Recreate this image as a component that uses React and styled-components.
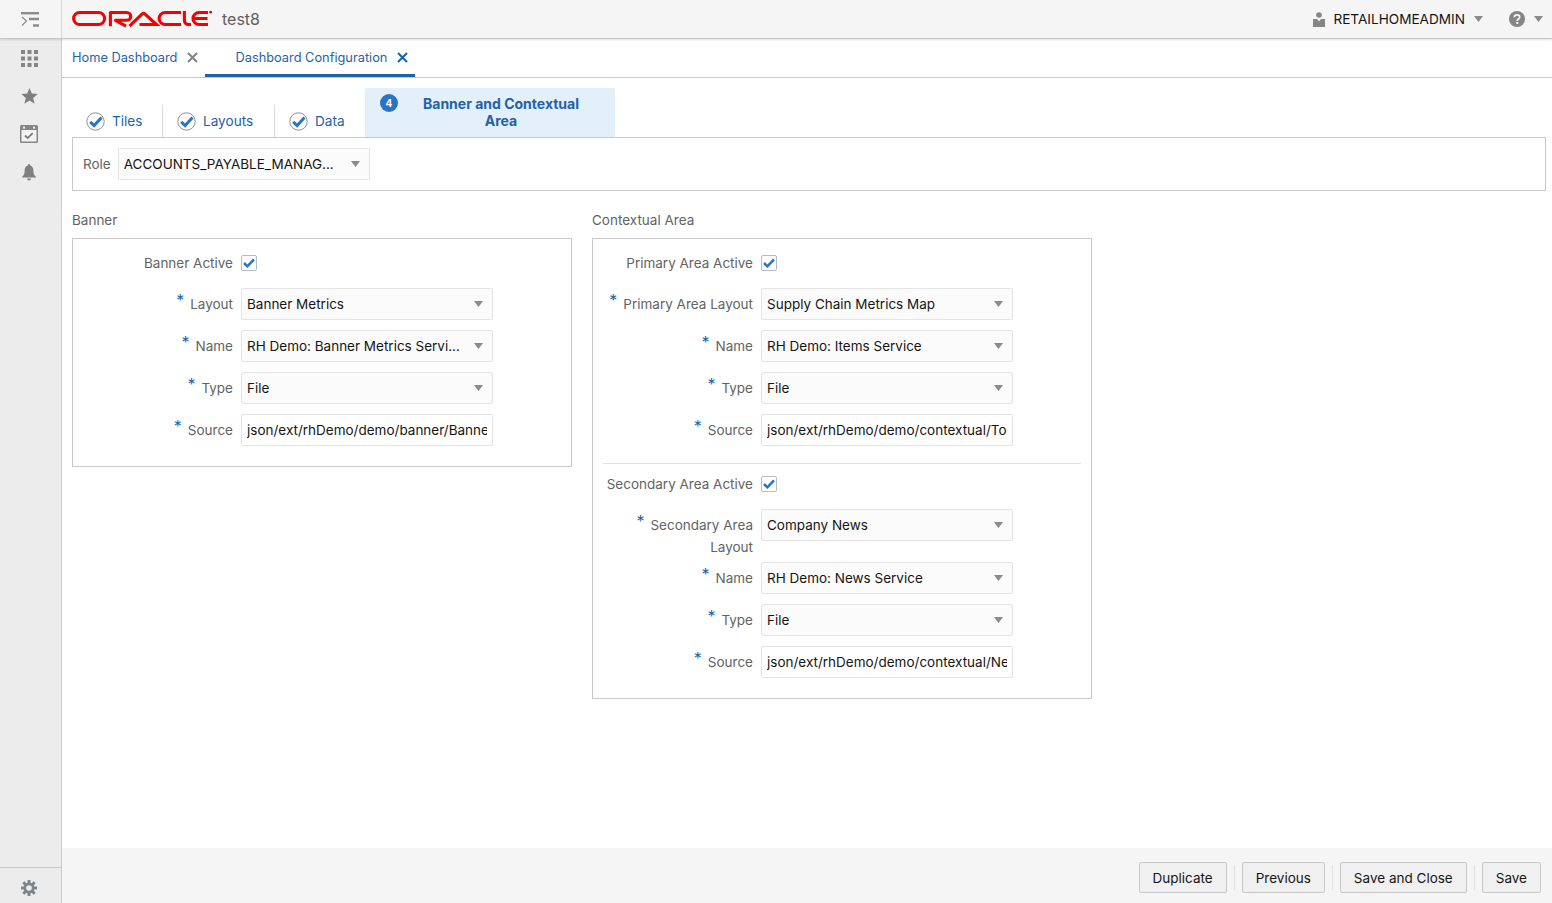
import React from 'react';
import styled, { createGlobalStyle } from 'styled-components';

const GlobalStyle = createGlobalStyle`
  html, body {
    margin: 0;
    height: 100%;
    overflow: hidden;
    background: #fff;
    font-family: Inter, "Noto Sans", "Liberation Sans", sans-serif;
    font-size: 13.5px;
    color: #161513;
  }
  * { box-sizing: border-box; }
`;

const BLUE = '#1f62a8';

function OracleLogo() {
  return (
    <svg width="141" height="18" viewBox="0 0 141 18" role="img" aria-label="Oracle">
      <g fill="none" stroke="#f80000" strokeWidth="3.1">
        <rect x="1.600" y="2.500" width="31" height="12" rx="6" />
        <path d="M38.400 16.200V2.500h16.400a3.900 3.900 0 0 1 0 7.800H43.500l10.500 5.800" strokeLinejoin="round" />
        <path d="M57.500 16.200 70.500 3.600a1.400 1.400 0 0 1 2 0L84.500 14.500H67.500" />
        <path d="M109 2.500H93.100a6 6 0 0 0 0 12H109" />
        <path d="M112.400 1V10.500a4 4 0 0 0 4 4H119" />
        <path d="M136 2.500H127a6 6 0 0 0 0 12h9M122 8.500h13.500" />
      </g>
      <circle cx="138.600" cy="2.200" r="1.400" fill="#f80000" />
    </svg>
  );
}

function Caret() {
  return (
    <svg width="9" height="6" viewBox="0 0 9 6">
      <path d="M0 0h9L4.500 6z" fill="#8a8a8a" />
    </svg>
  );
}

function CloseIcon({ color }) {
  return (
    <svg width="11" height="11" viewBox="0 0 11 11">
      <path d="M1 1l9 9M10 1l-9 9" stroke={color} strokeWidth="2.100" fill="none" />
    </svg>
  );
}

function DoneIcon() {
  return (
    <svg width="19" height="19" viewBox="0 0 19 19">
      <circle cx="9.500" cy="9.500" r="8.700" fill="#fff" stroke="#8f8f8f" />
      <path d="M4.200 9.800l3.900 3.700 7.400-8" fill="none" stroke="#2b73c4" strokeWidth="3" />
    </svg>
  );
}

function MenuIcon() {
  return (
    <svg width="18" height="15" viewBox="0 0 18 15">
      <path d="M0 1.200h18" stroke="#8c8c8c" strokeWidth="2.400" />
      <path d="M8 7h10M12 13.500h6" stroke="#8c8c8c" strokeWidth="2.400" />
      <path d="M1 5 5.500 9 1 13.500" stroke="#8c8c8c" strokeWidth="1.200" fill="none" />
    </svg>
  );
}

function GridIcon() {
  const cells = [0, 6.500, 13];
  return (
    <svg width="17" height="17" viewBox="0 0 17 17">
      {cells.map(y => cells.map(x => <rect key={`${x}-${y}`} x={x} y={y} width="4" height="4" fill="#858585" />))}
    </svg>
  );
}

function StarIcon() {
  return (
    <svg width="17" height="16" viewBox="0 0 17 16">
      <path d="M8.500 0l2.300 5.500 5.900.5-4.500 3.900 1.400 5.800-5.100-3.100-5.100 3.100 1.400-5.800L.3 6l5.900-.5z" fill="#7f7f7f" />
    </svg>
  );
}

function CalendarIcon() {
  return (
    <svg width="18" height="18" viewBox="0 0 18 18">
      <rect x="0" y="0" width="18" height="18" rx="1.500" fill="#858585" />
      <rect x="1.500" y="5" width="15" height="11.500" fill="#f2f2f2" />
      <rect x="3" y="1.600" width="2" height="2" fill="#f2f2f2" />
      <rect x="13" y="1.600" width="2" height="2" fill="#f2f2f2" />
      <path d="M5 10.500l2.700 2.600 5-5" fill="none" stroke="#7a7a7a" strokeWidth="1.800" />
    </svg>
  );
}

function BellIcon() {
  return (
    <svg width="14" height="17" viewBox="0 0 14 17">
      <path d="M7 0a1.300 1.300 0 0 1 1.200 1.500C10.600 2.200 11.400 4.300 11.400 7c0 3 .9 4.400 2.600 5.900v.6H0v-.6C1.700 11.400 2.600 10 2.600 7c0-2.700.8-4.800 3.200-5.500A1.300 1.300 0 0 1 7 0z" fill="#7f7f7f" />
      <path d="M5 14.500h4a2 2 0 0 1-4 0z" fill="#7f7f7f" />
    </svg>
  );
}

function GearIcon() {
  return (
    <svg width="16" height="16" viewBox="0 0 16 16">
      <g stroke="#7f8588" strokeWidth="3">
        <path d="M8 0v16M0 8h16M2.300 2.300l11.400 11.400M13.700 2.300 2.300 13.700" />
      </g>
      <circle cx="8" cy="8" r="5.500" fill="#7f8588" />
      <circle cx="8" cy="8" r="2.800" fill="#ececec" />
    </svg>
  );
}

function UserIcon() {
  return (
    <svg width="12" height="15" viewBox="0 0 12 15">
      <circle cx="6" cy="3" r="2.800" fill="#858585" />
      <path d="M0 7h4l2 2.500L8 7h4v8H0z" fill="#858585" />
    </svg>
  );
}

function HelpIcon() {
  return (
    <svg width="16" height="16" viewBox="0 0 16 16">
      <circle cx="8" cy="8" r="8" fill="#858585" />
      <path d="M5.300 6.200A2.700 2.500 0 0 1 8 3.800c1.600 0 2.700 1 2.700 2.300 0 1.900-2.500 1.900-2.500 3.900" fill="none" stroke="#f5f5f5" strokeWidth="1.700" />
      <rect x="7.200" y="11" width="2" height="2" fill="#f5f5f5" />
    </svg>
  );
}

function Select({ value }) {
  return (
    <SelectBox>
      <SelectValue>{value}</SelectValue>
      <Caret />
    </SelectBox>
  );
}

function Check() {
  return (
    <CheckBox>
      <svg width="12" height="10" viewBox="0 0 12 10">
        <path d="M1 5l3.400 3.300L11 1.300" fill="none" stroke="#2b73c4" strokeWidth="2.500" />
      </svg>
    </CheckBox>
  );
}

function Field({ label, required, select, value }) {
  return (
    <FormRow>
      <FieldLabel>
        {required && <Required>*</Required>}
        {label}
      </FieldLabel>
      {select ? <Select value={value} /> : <TextInput readOnly value={value} />}
    </FormRow>
  );
}

function CheckField({ label }) {
  return (
    <CheckRow>
      <FieldLabel>{label}</FieldLabel>
      <Check />
    </CheckRow>
  );
}

export default function App() {
  return (
    <>
      <GlobalStyle />
      <Page>
        <TopBar>
          <MenuCell><MenuIcon /></MenuCell>
          <Brand>
            <OracleLogo />
            <AppName>test8</AppName>
          </Brand>
          <UserMenu>
            <UserIcon />
            <UserName>RETAILHOMEADMIN</UserName>
            <Caret />
          </UserMenu>
          <HelpMenu>
            <HelpIcon />
            <Caret />
          </HelpMenu>
        </TopBar>
        <Body>
          <SideNav>
            <NavIcons>
              <GridIcon />
              <StarIcon />
              <CalendarIcon />
              <BellIcon />
            </NavIcons>
            <NavFooter><GearIcon /></NavFooter>
          </SideNav>
          <Main>
            <PageTabs>
              <PageTab>
                Home Dashboard
                <CloseIcon color="#858585" />
              </PageTab>
              <PageTab $active>
                Dashboard Configuration
                <CloseIcon color={BLUE} />
              </PageTab>
            </PageTabs>
            <Content>
              <Steps>
                <Step $width={91}><DoneIcon />Tiles</Step>
                <Step $width={112}><DoneIcon />Layouts</Step>
                <Step $width={90} $last><DoneIcon />Data</Step>
                <ActiveStep>
                  <StepNumber>4</StepNumber>
                  <ActiveStepText>Banner and Contextual<br />Area</ActiveStepText>
                </ActiveStep>
              </Steps>
              <RoleBox>
                <RoleLabel>Role</RoleLabel>
                <Select value="ACCOUNTS_PAYABLE_MANAG..." />
              </RoleBox>
              <Sections>
                <Section>
                  <SectionTitle>Banner</SectionTitle>
                  <Panel>
                    <CheckField label="Banner Active" />
                    <Field required select label="Layout" value="Banner Metrics" />
                    <Field required select label="Name" value="RH Demo: Banner Metrics Servi..." />
                    <Field required select label="Type" value="File" />
                    <Field required label="Source" value="json/ext/rhDemo/demo/banner/BannerMetrics.json" />
                  </Panel>
                </Section>
                <Section>
                  <SectionTitle>Contextual Area</SectionTitle>
                  <Panel>
                    <CheckField label="Primary Area Active" />
                    <Field required select label="Primary Area Layout" value="Supply Chain Metrics Map" />
                    <Field required select label="Name" value="RH Demo: Items Service" />
                    <Field required select label="Type" value="File" />
                    <Field required label="Source" value="json/ext/rhDemo/demo/contextual/TopItems.json" />
                    <Divider />
                    <CheckField label="Secondary Area Active" />
                    <Field required select label="Secondary Area Layout" value="Company News" />
                    <Field required select label="Name" value="RH Demo: News Service" />
                    <Field required select label="Type" value="File" />
                    <Field required label="Source" value="json/ext/rhDemo/demo/contextual/News.json" />
                  </Panel>
                </Section>
              </Sections>
            </Content>
            <Footer>
              <Button>Duplicate</Button>
              <ButtonDivider />
              <Button>Previous</Button>
              <ButtonDivider />
              <Button>Save and Close</Button>
              <ButtonDivider />
              <Button>Save</Button>
            </Footer>
          </Main>
        </Body>
      </Page>
    </>
  );
}

const Page = styled.div`
  display: flex;
  flex-direction: column;
  height: 100vh;
`;

const TopBar = styled.header`
  position: relative;
  z-index: 1;
  display: flex;
  align-items: center;
  flex: none;
  height: 39px;
  background: #f5f5f5;
  border-bottom: 1px solid #c4c6c8;
  box-shadow: 0 1px 2px rgba(0, 0, 0, 0.12);
`;

const MenuCell = styled.div`
  display: flex;
  align-items: center;
  justify-content: center;
  width: 62px;
  height: 100%;
  padding-right: 2px;
  border-right: 1px solid #d3d8dc;
`;

const Brand = styled.div`
  display: flex;
  align-items: center;
  gap: 9px;
  margin-left: 10px;
`;

const AppName = styled.span`
  font-size: 16px;
  color: #5f5f5f;
`;

const UserMenu = styled.div`
  display: flex;
  align-items: center;
  margin-left: auto;
  svg:first-child { margin-right: 8px; }
  svg:last-child { margin-left: 9px; }
`;

const UserName = styled.span`
  padding-bottom: 1px;
  font-size: 13.6px;
  color: #161513;
`;

const HelpMenu = styled.div`
  display: flex;
  align-items: center;
  gap: 9px;
  margin-left: 26px;
  margin-right: 9px;
`;

const Body = styled.div`
  display: flex;
  flex: 1;
  min-height: 0;
`;

const SideNav = styled.nav`
  display: flex;
  flex-direction: column;
  flex: none;
  width: 62px;
  padding-right: 3px;
  background: #ececec;
  border-right: 1px solid #c9cccf;
`;

const NavIcons = styled.div`
  display: flex;
  flex-direction: column;
  align-items: center;
  flex: 1;
  gap: 21px;
  padding-top: 11px;
`;

const NavFooter = styled.div`
  display: flex;
  align-items: center;
  justify-content: center;
  height: 36px;
  margin-right: -3px;
  padding: 4px 3px 0 0;
  border-top: 1px solid #c9c9c9;
`;

const Main = styled.main`
  display: flex;
  flex-direction: column;
  flex: 1;
  min-width: 0;
`;

const PageTabs = styled.div`
  display: flex;
  flex: none;
  height: 39px;
  padding-left: 10px;
  border-bottom: 1px solid #c4ccd2;
`;

const PageTab = styled.div`
  display: flex;
  align-items: center;
  gap: 10px;
  height: 38px;
  margin-right: ${props => (props.$active ? 0 : '7px')};
  padding: ${props => (props.$active ? '2px 7px 0 30px' : '2px 0 0')};
  font-size: 12.8px;
  color: ${BLUE};
  border-bottom: 3px solid ${props => (props.$active ? BLUE : 'transparent')};
`;

const Content = styled.div`
  flex: 1;
  min-height: 0;
  padding: 10px 6px 0 10px;
`;

const Steps = styled.div`
  display: flex;
  align-items: flex-end;
  height: 49px;
`;

const Step = styled.div`
  display: flex;
  align-items: center;
  gap: 7px;
  width: ${props => props.$width}px;
  height: 32px;
  padding-left: 14px;
  font-size: 13.6px;
  color: ${BLUE};
  border-right: ${props => (props.$last ? 'none' : '1px solid #d6d9dc')};
`;

const ActiveStep = styled.div`
  position: relative;
  display: flex;
  justify-content: center;
  width: 250px;
  height: 49px;
  padding: 7px 0 0 22px;
  background: #e3eff9;
  border-radius: 2px 2px 0 0;
`;

const StepNumber = styled.span`
  position: absolute;
  top: 6px;
  left: 15px;
  width: 18px;
  height: 18px;
  border-radius: 50%;
  background: #2b73c4;
  color: #fff;
  font-size: 10px;
  font-weight: 700;
  line-height: 18px;
  text-align: center;
`;

const ActiveStepText = styled.div`
  font-size: 14px;
  font-weight: 700;
  line-height: 17px;
  text-align: center;
  color: ${BLUE};
`;

const RoleBox = styled.div`
  display: flex;
  align-items: center;
  gap: 7px;
  height: 54px;
  padding-left: 10px;
  border: 1px solid #c9c9c9;
`;

const RoleLabel = styled.span`
  color: #636363;
  font-size: 13.5px;
`;

const Sections = styled.div`
  display: flex;
  align-items: flex-start;
  gap: 20px;
  margin-top: 18px;
`;

const Section = styled.section`
  width: 500px;
`;

const SectionTitle = styled.h2`
  margin: 0 0 7px;
  font-size: 13.5px;
  font-weight: 400;
  line-height: 22px;
  color: #636363;
`;

const Panel = styled.div`
  padding: 8px 10px 20px;
  border: 1px solid #c9c9c9;
`;

const FormRow = styled.div`
  display: grid;
  grid-template-columns: 150px 252px;
  column-gap: 8px;
  margin-top: 10px;
`;

const CheckRow = styled(FormRow)`
  align-items: center;
  height: 32px;
  margin-top: 0;
  & + ${FormRow} { margin-top: 9px; }
`;

const FieldLabel = styled.label`
  margin-bottom: -6px;
  padding-top: 5px;
  font-size: 13.5px;
  line-height: 22px;
  text-align: right;
  color: #636363;
  ${CheckRow} > & {
    margin-bottom: 0;
    padding-top: 0;
  }
`;

const Required = styled.span`
  position: relative;
  top: -3px;
  margin-right: 6px;
  font-size: 16px;
  line-height: 0;
  color: ${BLUE};
`;

const SelectBox = styled.div`
  display: flex;
  align-items: center;
  justify-content: space-between;
  width: 252px;
  height: 32px;
  padding: 0 9px 0 5px;
  background: #fbfbfb;
  border: 1px solid #e4e4e4;
  border-radius: 2px;
`;

const SelectValue = styled.span`
  overflow: hidden;
  padding-bottom: 1px;
  white-space: nowrap;
  font-size: 13.5px;
  color: #161513;
`;

const TextInput = styled.input`
  width: 252px;
  height: 32px;
  padding: 0 5px 1px 5px;
  background: #fff;
  border: 1px solid #e4e4e4;
  border-radius: 2px;
  outline: none;
  font: 13.5px Inter, "Noto Sans", "Liberation Sans", sans-serif;
  color: #161513;
`;

const CheckBox = styled.span`
  display: flex;
  align-items: center;
  justify-content: center;
  width: 16px;
  height: 16px;
  background: #fff;
  border: 1px solid #b5bcc2;
  border-radius: 2px;
`;

const Divider = styled.hr`
  height: 1px;
  margin: 17px 0 4px;
  border: 0;
  background: #e2e2e2;
`;

const Footer = styled.footer`
  display: flex;
  align-items: center;
  justify-content: flex-end;
  flex: none;
  gap: 7px;
  height: 55px;
  padding: 4px 11px 0 0;
  background: #f5f5f5;
`;

const Button = styled.button`
  height: 31px;
  padding: 0 13px;
  background: #f0f0f0;
  border: 1px solid #c8c8c8;
  border-radius: 2px;
  font: 13.5px Inter, "Noto Sans", "Liberation Sans", sans-serif;
  color: #161513;
`;

const ButtonDivider = styled.span`
  width: 1px;
  height: 25px;
  background: #e0e0e0;
`;
